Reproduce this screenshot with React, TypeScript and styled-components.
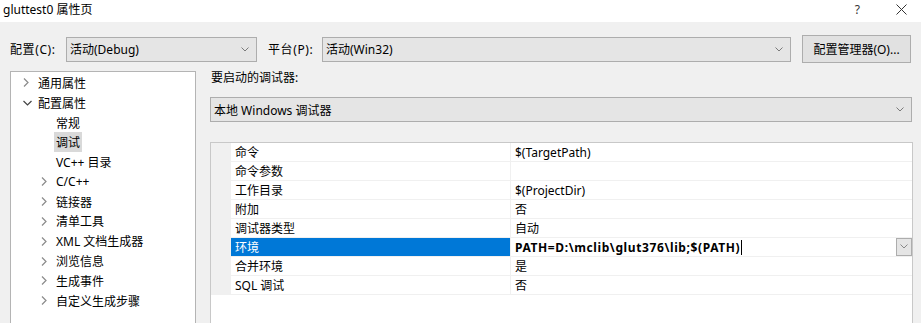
import styled, { createGlobalStyle } from "styled-components";

const GlobalStyle = createGlobalStyle`
  html, body {
    margin: 0;
    padding: 0;
    height: 323px;
    overflow: hidden;
    background: #f0f0f0;
  }
  body {
    font-family: "Noto Sans", "Noto Sans CJK SC", sans-serif;
    font-size: 12px;
    color: #000;
  }
`;

type TreeItem = {
  label: string;
  level: number;
  arrow?: "right" | "down";
  selected?: boolean;
};

const treeItems: TreeItem[] = [
  { label: "通用属性", level: 0, arrow: "right" },
  { label: "配置属性", level: 0, arrow: "down" },
  { label: "常规", level: 1 },
  { label: "调试", level: 1, selected: true },
  { label: "VC++ 目录", level: 1 },
  { label: "C/C++", level: 1, arrow: "right" },
  { label: "链接器", level: 1, arrow: "right" },
  { label: "清单工具", level: 1, arrow: "right" },
  { label: "XML 文档生成器", level: 1, arrow: "right" },
  { label: "浏览信息", level: 1, arrow: "right" },
  { label: "生成事件", level: 1, arrow: "right" },
  { label: "自定义生成步骤", level: 1, arrow: "right" },
];

type PropRow = { name: string; value: string; active?: boolean };

const propRows: PropRow[] = [
  { name: "命令", value: "$(TargetPath)" },
  { name: "命令参数", value: "" },
  { name: "工作目录", value: "$(ProjectDir)" },
  { name: "附加", value: "否" },
  { name: "调试器类型", value: "自动" },
  { name: "环境", value: "PATH=D:\\mclib\\glut376\\lib;$(PATH)", active: true },
  { name: "合并环境", value: "是" },
  { name: "SQL 调试", value: "否" },
];

function ChevronDown({ color = "#7a7a7a" }: { color?: string }) {
  return (
    <svg width="8" height="5" viewBox="0 0 8 5">
      <polyline points="0.5,0.5 4,4 7.5,0.5" fill="none" stroke={color} strokeWidth="1" />
    </svg>
  );
}

function TreeArrow({ dir }: { dir: "right" | "down" }) {
  return dir === "right" ? (
    <svg width="6" height="9" viewBox="0 0 6 9">
      <polyline points="1,0.5 5,4.5 1,8.5" fill="none" stroke="#8a8a8a" strokeWidth="1.2" />
    </svg>
  ) : (
    <svg width="9" height="6" viewBox="0 0 9 6">
      <polyline points="0.5,1 4.5,5 8.5,1" fill="none" stroke="#444" strokeWidth="1.2" />
    </svg>
  );
}

function App() {
  return (
    <>
      <GlobalStyle />
      <Window>
        <TitleBar>
          <TitleText>gluttest0 属性页</TitleText>
          <TitleButtons>
            <Help>?</Help>
            <svg width="11" height="11" viewBox="0 0 11 11">
              <line x1="0.5" y1="0.5" x2="10.5" y2="10.5" stroke="#333" strokeWidth="1" />
              <line x1="10.5" y1="0.5" x2="0.5" y2="10.5" stroke="#333" strokeWidth="1" />
            </svg>
          </TitleButtons>
        </TitleBar>

        <Toolbar>
          <FieldLabel width={56}>配置(C):</FieldLabel>
          <Combo width={191}>
            <span>活动(Debug)</span>
            <ChevronDown />
          </Combo>
          <FieldLabel width={54}>平台(P):</FieldLabel>
          <Combo width={469}>
            <span>活动(Win32)</span>
            <ChevronDown />
          </Combo>
          <Button>配置管理器(O)...</Button>
        </Toolbar>

        <Main>
          <Tree>
            {treeItems.map((item) => (
              <TreeRow key={item.label} level={item.level}>
                <ArrowSlot>{item.arrow && <TreeArrow dir={item.arrow} />}</ArrowSlot>
                <TreeLabel selected={item.selected}>{item.label}</TreeLabel>
              </TreeRow>
            ))}
          </Tree>

          <Right>
            <SectionLabel>要启动的调试器:</SectionLabel>
            <Combo width={702} wide>
              <span>本地 Windows 调试器</span>
              <ChevronDown />
            </Combo>
            <Grid>
              {propRows.map((row) => (
                <GridRow key={row.name}>
                  <Gutter />
                  <NameCell active={row.active}>{row.name}</NameCell>
                  <ValueCell active={row.active}>
                    <span>
                      {row.value}
                      {row.active && <Caret />}
                    </span>
                    {row.active && (
                      <DropButton>
                        <ChevronDown color="#888" />
                      </DropButton>
                    )}
                  </ValueCell>
                </GridRow>
              ))}
            </Grid>
          </Right>
        </Main>
      </Window>
    </>
  );
}

export default App;

const Window = styled.div`
  display: flex;
  flex-direction: column;
  height: 323px;
  overflow: hidden;
`;

const TitleBar = styled.div`
  height: 22px;
  flex-shrink: 0;
  background: #fff;
  display: flex;
  align-items: center;
  justify-content: space-between;
  padding: 0 14px 0 3px;
`;

const TitleText = styled.span`
  font-size: 12px;
  margin-top: -4px;
`;

const TitleButtons = styled.div`
  display: flex;
  align-items: center;
  gap: 36px;
  margin-top: -4px;
`;

const Help = styled.span`
  font-size: 12px;
  color: #333;
`;

const Toolbar = styled.div`
  display: flex;
  align-items: center;
  height: 28px;
  margin-top: 13px;
  padding: 0 10px;
  flex-shrink: 0;
`;

const FieldLabel = styled.span<{ width: number }>`
  white-space: nowrap;
  width: ${(p) => p.width}px;
  flex-shrink: 0;
  letter-spacing: 0.6px;
`;

const Combo = styled.div<{ width: number; wide?: boolean }>`
  width: ${(p) => p.width}px;
  height: 25px;
  box-sizing: border-box;
  border: 1px solid #adadad;
  background: #e5e5e5;
  display: flex;
  align-items: center;
  justify-content: space-between;
  padding: 0 7px 0 3px;
  margin-right: 11px;
  flex-shrink: 0;
  span {
    white-space: nowrap;
  }
  ${(p) => p.wide && "margin-right: 0; margin-top: 12px;"}
`;

const Button = styled.div`
  width: 109px;
  height: 28px;
  box-sizing: border-box;
  border: 1px solid #adadad;
  background: #e1e1e1;
  display: flex;
  align-items: center;
  justify-content: center;
  white-space: nowrap;
`;

const Main = styled.div`
  display: flex;
  flex: 1;
  margin-top: 8px;
  padding: 0 8px 0 10px;
  gap: 14px;
  min-height: 0;
`;

const Tree = styled.div`
  width: 186px;
  box-sizing: border-box;
  background: #fff;
  border: 1px solid #b4b4b4;
  border-bottom: none;
  padding-top: 1px;
  flex-shrink: 0;
`;

const TreeRow = styled.div<{ level: number }>`
  display: flex;
  align-items: center;
  height: 19.8px;
  padding-left: ${(p) => 9 + p.level * 18}px;
`;

const ArrowSlot = styled.span`
  width: 18px;
  box-sizing: border-box;
  display: flex;
  align-items: center;
  justify-content: flex-start;
  padding-left: 3px;
`;

const TreeLabel = styled.span<{ selected?: boolean }>`
  white-space: nowrap;
  padding: 1px 2px;
  margin-left: -2px;
  background: ${(p) => (p.selected ? "#d9d9d9" : "transparent")};
`;

const Right = styled.div`
  flex: 1;
  display: flex;
  flex-direction: column;
  min-width: 0;
`;

const SectionLabel = styled.div`
  height: 14px;
  line-height: 14px;
  padding-left: 1px;
`;

const Grid = styled.div`
  flex: 1;
  margin-top: 20px;
  background: #fff;
  border: 1px solid #c8c8c8;
  border-bottom: none;
`;

const GridRow = styled.div`
  display: flex;
  height: 19px;
  box-sizing: border-box;
  border-bottom: 1px solid #f0f0f0;
`;

const Gutter = styled.div`
  width: 20px;
  background: #f0f0f0;
  flex-shrink: 0;
`;

const NameCell = styled.div<{ active?: boolean }>`
  width: 280px;
  flex-shrink: 0;
  box-sizing: border-box;
  padding-left: 4px;
  display: flex;
  align-items: center;
  border-right: 1px solid #f0f0f0;
  background: ${(p) => (p.active ? "#0078d7" : "#fff")};
  color: ${(p) => (p.active ? "#fff" : "#000")};
`;

const ValueCell = styled.div<{ active?: boolean }>`
  flex: 1;
  display: flex;
  align-items: center;
  justify-content: space-between;
  padding-left: 4px;
  font-weight: ${(p) => (p.active ? 700 : 400)};
  letter-spacing: ${(p) => (p.active ? "0.6px" : "0")};
  white-space: nowrap;
  span {
    display: flex;
    align-items: center;
  }
`;

const Caret = styled.i`
  display: inline-block;
  width: 1px;
  height: 15px;
  background: #000;
  margin-left: 1px;
`;

const DropButton = styled.div`
  width: 16px;
  height: 18px;
  box-sizing: border-box;
  border: 1px solid #adadad;
  background: #e5e5e5;
  display: flex;
  align-items: center;
  justify-content: center;
  margin-top: -1px;
`;
